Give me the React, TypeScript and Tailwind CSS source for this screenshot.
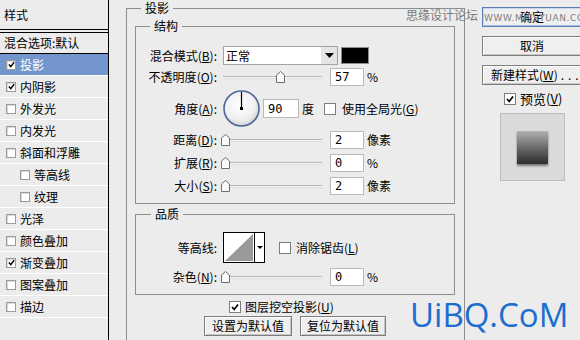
import React from 'react';

const FONT = "font-['Noto_Sans_CJK_SC','Liberation_Sans',sans-serif]";

interface LayerItem {
  label: string;
  checked?: boolean;
  selected?: boolean;
  sub?: boolean;
}

const layerItems: LayerItem[] = [
  { label: '投影', checked: true, selected: true },
  { label: '内阴影', checked: true },
  { label: '外发光' },
  { label: '内发光' },
  { label: '斜面和浮雕' },
  { label: '等高线', sub: true },
  { label: '纹理', sub: true },
  { label: '光泽' },
  { label: '颜色叠加' },
  { label: '渐变叠加', checked: true },
  { label: '图案叠加' },
  { label: '描边' },
];

function Tick({ size = 8 }: { size?: number }) {
  return (
    <svg width={size} height={size} viewBox="0 0 8 8">
      <path d="M1 4 L3.2 6.4 L7 1.4" fill="none" stroke="#000" strokeWidth="1.7" />
    </svg>
  );
}

function SmallBox({ checked }: { checked?: boolean }) {
  return (
    <span className="w-[10px] h-[10px] shrink-0 border border-[#9a9a9a] bg-white flex items-center justify-center shadow-[inset_1px_1px_0_#dcdcdc]">
      {checked && <Tick size={7} />}
    </span>
  );
}

function CheckBox({ checked }: { checked?: boolean }) {
  return (
    <span className="w-[12px] h-[12px] shrink-0 border border-[#7c7c7c] bg-white flex items-center justify-center">
      {checked && <Tick size={8} />}
    </span>
  );
}

function Key({ k }: { k: string }) {
  return (
    <>
      (<u>{k}</u>)
    </>
  );
}

function Slider({ at }: { at: number }) {
  return (
    <div className="relative w-[101px] h-[18px] shrink-0">
      <div className="absolute left-[2px] right-0 top-[8px] h-[3px] border-t border-[#b4b4b4] bg-[#f8f8f8] border-b border-b-[#dedede]" />
      <svg className="absolute top-[3px]" style={{ left: at }} width="9" height="12" viewBox="0 0 9 12">
        <path d="M0.5 4 L4.5 0.5 L8.5 4 V11.5 H0.5 Z" fill="#fafafa" stroke="#6e6e6e" />
      </svg>
    </div>
  );
}

function NumField({ value }: { value: string }) {
  return (
    <div className="w-[34px] h-[18px] shrink-0 bg-white border border-[#b9b9b9] pl-[4px] flex items-center text-[12px] font-['DejaVu_Sans_Mono',monospace]">
      {value}
    </div>
  );
}

function Label({ children }: { children: React.ReactNode }) {
  return <div className="w-[83px] shrink-0 text-right pr-[2px]">{children}</div>;
}

function SliderRow({ label, at, value, unit, className }: { label: React.ReactNode; at: number; value: string; unit: string; className: string }) {
  return (
    <div className={`flex items-center h-[18px] ${className}`}>
      <Label>{label}</Label>
      <div className="ml-[2px]" />
      <Slider at={at} />
      <div className="ml-[8px]">
        <NumField value={value} />
      </div>
      <span className="ml-[3px]">{unit}</span>
    </div>
  );
}

function Btn({ children, className = '', primary }: { children: React.ReactNode; className?: string; primary?: boolean }) {
  return (
    <div
      className={`flex items-center justify-center h-[20px] bg-[#efefef] border ${
        primary
          ? 'border-[#5c7fb4] shadow-[inset_1px_1px_0_#c9d8f0,inset_-1px_-1px_0_#a9bfe0]'
          : 'border-[#7d7d7d] shadow-[inset_1px_1px_0_#ffffff,inset_-1px_-1px_0_#c6c6c6]'
      } ${className}`}
    >
      <span className="whitespace-nowrap">{children}</span>
    </div>
  );
}

export default function App() {
  return (
    <div className={`relative w-[580px] h-[340px] overflow-hidden bg-[#ececec] text-black text-[12px] leading-[14px] flex ${FONT}`}>
      {/* style list */}
      <div className="w-[109px] shrink-0 border-r border-black">
        <div className="h-[30px] border-b border-black flex items-center pl-[4px]">样式</div>
        <div className="h-[2px]" />
        <div className="h-[22px] border-t border-b border-black flex items-center pl-[4px]">混合选项:默认</div>
        {layerItems.map((it) => (
          <div
            key={it.label}
            className={`h-[22px] border-b border-white flex items-center ${it.sub ? 'pl-[20px]' : 'pl-[6px]'} ${
              it.selected ? 'bg-[#7397cc] text-white' : ''
            }`}
          >
            <SmallBox checked={it.checked} />
            <span className="ml-[4px]">{it.label}</span>
          </div>
        ))}
      </div>

      {/* drop shadow settings */}
      <div className="w-[356px] shrink-0 pl-[17px]">
        <fieldset className="mt-[1px] w-[339px] h-[360px] border border-[#8e8e8e] pl-[8px] pr-[9px]">
          <legend className="ml-[6px] px-[4px]">投影</legend>

          <fieldset className="mt-[4px] w-[320px] border border-[#8e8e8e] pt-[13px] pb-[8px]">
            <legend className="ml-[14px] px-[4px]">结构</legend>

            <div className="flex items-center h-[19px]">
              <Label>
                混合模式<Key k="B" />:
              </Label>
              <div className="ml-[4px] w-[115px] h-[19px] bg-white border border-[#a3a3a3] flex items-center">
                <span className="flex-1 pl-[2px]">正常</span>
                <div className="w-[16px] h-full bg-[#e4e4e4] flex items-center justify-center">
                  <svg width="9" height="5" viewBox="0 0 9 5">
                    <path d="M0 0 H9 L4.5 5 Z" fill="#000" />
                  </svg>
                </div>
              </div>
              <div className="ml-[3px] w-[28px] h-[17px] border border-[#8a8a8a] bg-black" />
            </div>

            <SliderRow label={<>不透明度<Key k="O" />:</>} at={55} value="57" unit="%" className="mt-[3px]" />

            <div className="mt-[4px] flex items-center h-[37px]">
              <Label>
                角度<Key k="A" />:
              </Label>
              <svg className="ml-[4px] shrink-0" width="37" height="37" viewBox="0 0 37 37">
                <defs>
                  <radialGradient id="dial" cx="45%" cy="40%" r="60%">
                    <stop offset="0%" stopColor="#ffffff" />
                    <stop offset="70%" stopColor="#f0f0f0" />
                    <stop offset="100%" stopColor="#d4d4d8" />
                  </radialGradient>
                </defs>
                <circle cx="18.5" cy="18.5" r="17.5" fill="url(#dial)" stroke="#4f6798" strokeWidth="1.6" />
                <line x1="18.5" y1="2" x2="18.5" y2="18.5" stroke="#000" strokeWidth="1.2" />
                <rect x="17" y="17" width="3" height="3" fill="#000" />
              </svg>
              <div className="ml-[3px] w-[36px] h-[19px] bg-white border border-[#b9b9b9] pl-[4px] flex items-center font-['DejaVu_Sans_Mono',monospace]">
                90
              </div>
              <span className="ml-[3px]">度</span>
              <div className="ml-[10px]">
                <CheckBox />
              </div>
              <span className="ml-[6px]">
                使用全局光<Key k="G" />
              </span>
            </div>

            <SliderRow label={<>距离<Key k="D" />:</>} at={0} value="2" unit="像素" className="mt-[4px]" />
            <SliderRow label={<>扩展<Key k="R" />:</>} at={0} value="0" unit="%" className="mt-[5px]" />
            <SliderRow label={<>大小<Key k="S" />:</>} at={0} value="2" unit="像素" className="mt-[5px]" />
          </fieldset>

          <fieldset className="mt-[3px] w-[320px] border border-[#8e8e8e] pt-[11px] pb-[8px]">
            <legend className="ml-[15px] px-[4px]">品质</legend>

            <div className="flex items-center h-[31px]">
              <Label>等高线:</Label>
              <svg className="ml-[4px] shrink-0" width="42" height="31" viewBox="0 0 42 31">
                <rect x="0.5" y="0.5" width="41" height="30" fill="#fff" stroke="#000" />
                <path d="M2 29 L30 2 V29 Z" fill="#999" />
                <line x1="31.5" y1="1" x2="31.5" y2="30" stroke="#000" />
                <path d="M34 14 H40 L37 17 Z" fill="#000" />
              </svg>
              <div className="ml-[14px]">
                <CheckBox />
              </div>
              <span className="ml-[5px]">
                消除锯齿<Key k="L" />
              </span>
            </div>

            <SliderRow label={<>杂色<Key k="N" />:</>} at={0} value="0" unit="%" className="mt-[5px]" />
          </fieldset>

          <div className="mt-[5px] h-[13px] flex items-center pl-[94px]">
            <CheckBox checked />
            <span className="ml-[4px]">
              图层挖空投影<Key k="U" />
            </span>
          </div>
          <div className="mt-[3px] flex pl-[69px] gap-[8px]">
            <Btn className="w-[88px]">设置为默认值</Btn>
            <Btn className="w-[86px]">复位为默认值</Btn>
          </div>
        </fieldset>
      </div>

      {/* dialog buttons */}
      <div className="pl-[17px] pt-[7px] flex flex-col">
        <Btn primary className="w-[100px] h-[19px]">确定</Btn>
        <Btn className="w-[100px] h-[19px] mt-[9px]">取消</Btn>
        <Btn className="w-[100px] h-[19px] mt-[9px] justify-start pl-[8px]">
          新建样式<Key k="W" />
          <span className="ml-[3px] tracking-[4px]">...</span>
        </Btn>
        <div className="mt-[8px] h-[12px] flex items-center pl-[22px]">
          <CheckBox checked />
          <span className="ml-[4px] text-[13px]">
            预览<Key k="V" />
          </span>
        </div>
        <div className="mt-[8px] ml-[18px] w-[65px] h-[68px] bg-[#dadada] border border-[#bdbdbd] flex justify-center pt-[17px]">
          <div className="w-[31px] h-[33px] bg-gradient-to-b from-[#b0b0b0] to-[#2e2e2e] shadow-[0_2px_2px_rgba(0,0,0,0.45)]" />
        </div>
      </div>

      {/* watermarks */}
      <div className="absolute left-[406px] top-[8px] text-[12px] text-[#7b7b7b]">思缘设计论坛</div>
      <div className="absolute left-[484px] top-[11px] text-[9px] tracking-[0.6px] text-[#808080] font-['DejaVu_Sans',sans-serif]">
        WWW.MISSYUAN.COM
      </div>
      <div className="absolute left-[410px] top-[295px] text-[33px] leading-[40px] text-[#1b6ed0] font-['Open_Sans',sans-serif]">
        UiBQ.CoM
      </div>
    </div>
  );
}
